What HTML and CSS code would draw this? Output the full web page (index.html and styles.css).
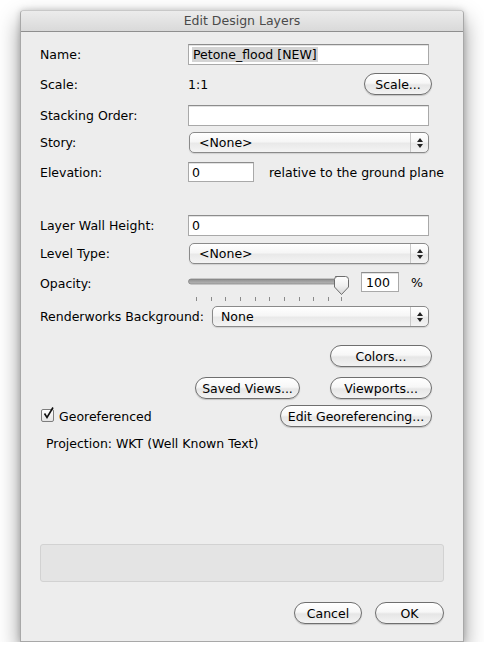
FILE: index.html
```html
<!DOCTYPE html>
<html>
<head>
<meta charset="utf-8">
<link rel="stylesheet" href="styles.css">
</head>
<body>
<div class="window">
  <div class="titlebar">Edit Design Layers</div>
  <div class="content">
    <div class="row row-name">
      <span class="label">Name:</span>
      <div class="field wide"><span class="sel">Petone_flood [NEW]</span></div>
    </div>
    <div class="row row-scale">
      <span class="label">Scale:</span>
      <span class="value">1:1</span>
      <span class="spacer"></span>
      <button class="btn w-scale">Scale...</button>
    </div>
    <div class="row row-stack">
      <span class="label">Stacking Order:</span>
      <div class="field wide"></div>
    </div>
    <div class="row row-story">
      <span class="label">Story:</span>
      <div class="popup wide-pop"><span class="ptext">&lt;None&gt;</span><span class="parrows"><svg width="8" height="12" viewBox="0 0 8 12"><path d="M4 1 L7 5 L1 5 Z M4 11 L7 7 L1 7 Z" fill="#222"/></svg></span></div>
    </div>
    <div class="row row-elev">
      <span class="label">Elevation:</span>
      <div class="field small">0</div>
      <span class="rel">relative to the ground plane</span>
    </div>
    <div class="row row-wall">
      <span class="label">Layer Wall Height:</span>
      <div class="field wide">0</div>
    </div>
    <div class="row row-level">
      <span class="label">Level Type:</span>
      <div class="popup wide-pop"><span class="ptext">&lt;None&gt;</span><span class="parrows"><svg width="8" height="12" viewBox="0 0 8 12"><path d="M4 1 L7 5 L1 5 Z M4 11 L7 7 L1 7 Z" fill="#222"/></svg></span></div>
    </div>
    <div class="row row-opacity">
      <span class="label">Opacity:</span>
      <svg class="slider" width="162" height="27" viewBox="0 0 162 27">
        <defs>
          <linearGradient id="trk" x1="0" y1="0" x2="0" y2="1">
            <stop offset="0" stop-color="#8d8d8d"/>
            <stop offset="1" stop-color="#b9b9b9"/>
          </linearGradient>
          <linearGradient id="thm" x1="0" y1="0" x2="0" y2="1">
            <stop offset="0" stop-color="#ffffff"/>
            <stop offset="0.5" stop-color="#f0f0f0"/>
            <stop offset="1" stop-color="#d6d6d6"/>
          </linearGradient>
        </defs>
        <rect x="0.5" y="3" width="152" height="5" rx="2.5" fill="url(#trk)" stroke="#7d7d7d" stroke-width="0.7"/>
        <path d="M147.5 0.5 H157.5 Q160.5 0.5 160.5 3.5 V11 L153.5 18.5 L146.5 11 V3.5 Q146.5 0.5 149.5 0.5 Z" fill="url(#thm)" stroke="#6d6d6d" stroke-width="1"/>
        <g stroke="#8a8a8a" stroke-width="1">
          <line x1="8.5" y1="21" x2="8.5" y2="25"/>
          <line x1="23.5" y1="21" x2="23.5" y2="25"/>
          <line x1="37.5" y1="21" x2="37.5" y2="25"/>
          <line x1="52.5" y1="21" x2="52.5" y2="25"/>
          <line x1="67.5" y1="21" x2="67.5" y2="25"/>
          <line x1="81.5" y1="21" x2="81.5" y2="25"/>
          <line x1="96.5" y1="21" x2="96.5" y2="25"/>
          <line x1="111.5" y1="21" x2="111.5" y2="25"/>
          <line x1="125.5" y1="21" x2="125.5" y2="25"/>
          <line x1="140.5" y1="21" x2="140.5" y2="25"/>
          <line x1="153.5" y1="21" x2="153.5" y2="25"/>
        </g>
      </svg>
      <div class="field pct">100</div>
      <span class="pctsign">%</span>
    </div>
    <div class="row row-render">
      <span class="label label-auto">Renderworks Background:</span>
      <div class="popup render-pop"><span class="ptext">None</span><span class="parrows"><svg width="8" height="12" viewBox="0 0 8 12"><path d="M4 1 L7 5 L1 5 Z M4 11 L7 7 L1 7 Z" fill="#222"/></svg></span></div>
    </div>
    <div class="row row-colors">
      <span class="spacer"></span>
      <button class="btn w-colors">Colors...</button>
    </div>
    <div class="row row-views">
      <span class="spacer"></span>
      <button class="btn w-saved">Saved Views...</button>
      <button class="btn w-colors">Viewports...</button>
    </div>
    <div class="row row-geo">
      <span class="check"><svg width="13" height="13" viewBox="0 0 13 13"><path d="M2.5 6.5 L5 10.5 L11 0.5" fill="none" stroke="#111" stroke-width="1.6"/></svg></span>
      <span class="checklabel">Georeferenced</span>
      <span class="spacer"></span>
      <button class="btn w-geo">Edit Georeferencing...</button>
    </div>
    <div class="row row-proj">
      <span class="proj">Projection: WKT (Well Known Text)</span>
    </div>
    <div class="msgbox"></div>
    <div class="row row-ok">
      <span class="spacer"></span>
      <button class="btn w-cancel">Cancel</button>
      <button class="btn w-ok">OK</button>
    </div>
  </div>
</div>
</body>
</html>
```
FILE: styles.css
```css
html, body {
  margin: 0;
  padding: 0;
  background: #ffffff;
}
body {
  font-family: "DejaVu Sans", "Liberation Sans", sans-serif;
  font-size: 12.5px;
  color: #000;
}
.window {
  margin: 10px 0 0 20px;
  width: 444px;
  height: 632px;
  box-sizing: border-box;
  background: #ededed;
  border: 1px solid #a8a8a8;
  border-top-color: #c8c8c8;
  border-radius: 4px 4px 0 0;
  box-shadow: 0 10px 22px rgba(0,0,0,0.42), 0 0 6px rgba(0,0,0,0.18);
  display: flex;
  flex-direction: column;
}
.titlebar {
  height: 20px;
  line-height: 20px;
  text-align: center;
  color: #4a4a4a;
  font-size: 12.5px;
  background: linear-gradient(#ececec, #d9d9d9);
  border-bottom: 1px solid #8f8f8f;
  border-radius: 3px 3px 0 0;
}
.content {
  padding: 0 19px;
  display: flex;
  flex-direction: column;
}
.row {
  display: flex;
  align-items: center;
}
.label {
  width: 148px;
  flex: none;
}
.label-auto {
  width: auto;
}
.spacer { flex: 1; }
.field {
  box-sizing: border-box;
  height: 21px;
  background: #fff;
  border: 1px solid #a9a9a9;
  border-top-color: #8c8c8c;
  box-shadow: inset 0 1px 0 #e2e2e2;
  padding: 2px 0 0 3px;
  line-height: 16px;
}
.wide { width: 241px; }
.small { width: 66px; height: 20px; }
.pct { width: 38px; height: 20px; margin-left: 11px; padding-left: 4px; }
.sel {
  background: #d4d4d4;
  padding: 0 1px;
}
.rel { margin-left: 15px; }
.pctsign { margin-left: 12px; }
.popup {
  box-sizing: border-box;
  height: 21px;
  margin-left: 1px;
  border: 1px solid #8a8a8a;
  border-radius: 5px;
  background: linear-gradient(#ffffff, #f6f6f6 45%, #e9e9e9 55%, #f4f4f4);
  box-shadow: 0 1px 1px rgba(0,0,0,0.12);
  display: flex;
  align-items: center;
}
.wide-pop { width: 240px; }
.render-pop { width: 217px; margin-left: auto; margin-right: 15px; }
.ptext {
  flex: 1;
  padding-left: 9px;
}
.render-pop .ptext { padding-left: 8px; }
.parrows {
  width: 17px;
  height: 19px;
  border-left: 1px solid #c9c9c9;
  display: flex;
  align-items: center;
  justify-content: center;
}
.slider { display: block; flex: none; margin-top: 5px; }
.btn {
  box-sizing: border-box;
  height: 22px;
  font-family: "DejaVu Sans", "Liberation Sans", sans-serif;
  font-size: 12.5px;
  color: #000;
  border: 1px solid #6f6f6f;
  border-radius: 11px;
  background: linear-gradient(#ffffff, #f7f7f7 45%, #e6e6e6 55%, #f3f3f3);
  box-shadow: 0 1px 1px rgba(0,0,0,0.18);
  padding: 0;
  margin: 0 12px 0 0;
}
.w-scale { width: 68px; }
.w-colors { width: 102px; }
.w-saved { width: 105px; margin-right: 30px; }
.w-geo { width: 152px; }
.w-cancel { width: 68px; margin-right: 13px; }
.w-ok { width: 69px; margin-right: 0; }
.check {
  width: 13px;
  height: 13px;
  box-sizing: border-box;
  border: 1px solid #7d7d7d;
  border-radius: 2px;
  background: linear-gradient(#ffffff, #e4e4e4);
  display: flex;
  align-items: center;
  justify-content: center;
  margin-left: 1px;
  margin-top: -2px;
}
.check svg { margin-top: -3px; margin-left: 1px; overflow: visible; }
.checklabel { margin-left: 5px; }
.proj { margin-left: 6px; }

.row-name { margin-top: 12px; height: 21px; }
.row-scale { margin-top: 8px; height: 22px; }
.row-stack { margin-top: 10px; height: 21px; }
.row-story { margin-top: 6px; height: 21px; }
.row-elev { margin-top: 9px; height: 20px; }
.row-wall { margin-top: 33px; height: 21px; }
.row-level { margin-top: 7px; height: 21px; }
.row-opacity { margin-top: 7px; height: 27px; align-items: flex-start; }
.row-opacity .label { margin-top: 5px; }
.row-opacity .pct { margin-top: 1px; }
.row-opacity .pctsign { margin-top: 4px; }
.row-render { margin-top: 8px; height: 21px; }
.row-colors { margin-top: 18px; height: 22px; }
.row-views { margin-top: 10px; height: 22px; }
.row-geo { margin-top: 6px; height: 22px; }
.row-proj { margin-top: 8px; height: 16px; }
.msgbox {
  margin-top: 93px;
  height: 38px;
  box-sizing: border-box;
  border: 1px solid #d2d2d2;
  border-radius: 3px;
  background: #e4e4e4;
}
.row-ok { margin-top: 20px; height: 22px; }
```
